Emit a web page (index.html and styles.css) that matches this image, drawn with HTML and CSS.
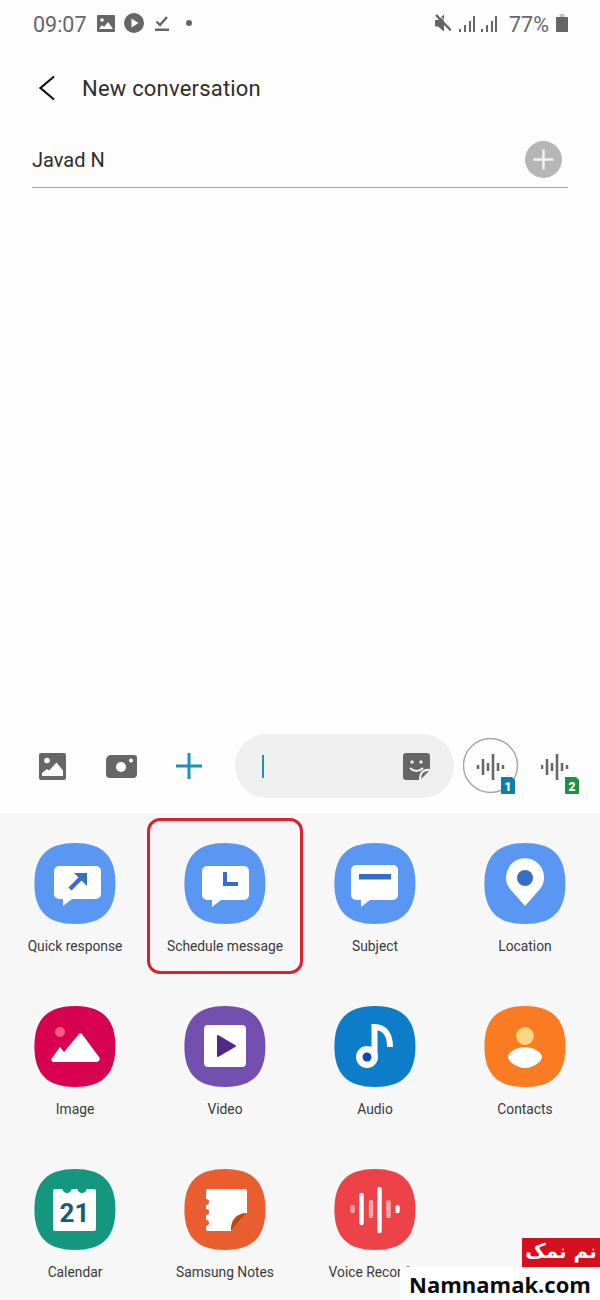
FILE: index.html
```html
<!DOCTYPE html>
<html lang="en">
<head>
<meta charset="utf-8">
<title>New conversation</title>
<link rel="stylesheet" href="styles.css">
</head>
<body>
<svg class="defs" aria-hidden="true"><defs>
  <path id="sq" d="M40 0C67.500 0 80.400 13 80.400 40.500C80.400 68 67.500 81 40 81C12.500 81-0.600 68-0.600 40.500C-0.600 13 12.500 0 40 0Z"/>
  <path id="wave" d="M1 12v4M6 6v16M11 10v8M16 1v26M21 10v8M26 12v4"/>
</defs></svg>
<div class="page">
  <div class="status">
    <span class="time">09:07</span>
    <svg class="st st-img" viewBox="0 0 18 17"><path fill="#666" d="M1 0h16a1 1 0 0 1 1 1v15a1 1 0 0 1-1 1H1a1 1 0 0 1-1-1V1a1 1 0 0 1 1-1Z"/><circle cx="5" cy="5" r="1.800" fill="#fff"/><path fill="#fff" d="M2 14l3-4 2 2 4-5 5 7Z"/></svg>
    <svg class="st st-play" viewBox="0 0 20 20"><circle cx="10" cy="10" r="10" fill="#666"/><path fill="#fff" d="M7.500 5.500l7 4.500-7 4.500Z"/></svg>
    <svg class="st st-check" viewBox="0 0 14 16"><path fill="none" stroke="#666" stroke-width="2.400" d="M1.500 6.500l3.500 3.500 7-8M0 14.800h14"/></svg>
    <span class="dot"></span>
    <span class="grow"></span>
    <svg class="st st-mute" viewBox="0 0 16 18"><path fill="#666" d="M0 6h3l6-5.500v17l-6-5H0Z"/><path stroke="#666" stroke-width="2.500" d="M1 1l15 15.500"/><path stroke="#fff" stroke-width="1" d="M3.500 0.500l13 13.500"/></svg>
    <svg class="st st-sig" viewBox="0 0 16 17"><path stroke="#666" stroke-width="2" d="M1 17v-3M6 17v-7M11 17v-11M15 17v-16"/></svg>
    <svg class="st st-sig st-sig2" viewBox="0 0 16 17"><path stroke="#666" stroke-width="2" d="M1 17v-3M6 17v-7M11 17v-11M15 17v-16"/></svg>
    <span class="pct">77%</span>
    <svg class="st st-bat" viewBox="0 0 12 18"><path fill="#c4c4c4" d="M3.500 0h5v3h-5Z"/><path fill="#666" d="M0 3h12v15H0Z"/></svg>
  </div>

  <div class="header">
    <svg class="back" viewBox="0 0 18 26"><path fill="none" stroke="#111" stroke-width="2.200" d="M16 1.500L2.500 13L16 24.500"/></svg>
    <span class="title">New conversation</span>
  </div>

  <div class="to-row">
    <span class="to-name">Javad N</span>
    <span class="add"><svg viewBox="0 0 37 37"><circle cx="18.500" cy="18.500" r="18.500" fill="#b6b6b6"/><path stroke="#f2f2f2" stroke-width="2.500" d="M18.500 8.500v20M8.500 18.500h20"/></svg></span>
  </div>

  <div class="thread"></div>

  <div class="compose">
    <svg class="c-img" viewBox="0 0 27 27"><path fill="#666" d="M2 0h23a2 2 0 0 1 2 2v23a2 2 0 0 1-2 2H2a2 2 0 0 1-2-2V2a2 2 0 0 1 2-2Z"/><circle cx="8" cy="7.500" r="2.800" fill="#fff"/><path fill="#fff" d="M3 23v-3l5-4 2 1.500 7.500-8 6.500 8V23Z"/></svg>
    <svg class="c-cam" viewBox="0 0 31 23"><path fill="#666" d="M4 0h24a3 3 0 0 1 3 3v16a4 4 0 0 1-4 4H4a4 4 0 0 1-4-4V6a6 6 0 0 1 4-6Z"/><circle cx="15" cy="12" r="5" fill="#fff"/><circle cx="25" cy="5.500" r="2" fill="#fff"/></svg>
    <svg class="c-plus" viewBox="0 0 26 26"><path stroke="#1b93b5" stroke-width="3" d="M13 0v27M0 13h26"/></svg>
    <div class="pill">
      <span class="caret"></span>
      <svg class="c-sticker" viewBox="0 0 27 27"><path fill="#666" d="M3 0h21a3 3 0 0 1 3 3v14L17 27H3a3 3 0 0 1-3-3V3a3 3 0 0 1 3-3Z"/><circle cx="9" cy="9" r="1.700" fill="#efefef"/><circle cx="18" cy="9" r="1.700" fill="#efefef"/><path fill="none" stroke="#efefef" stroke-width="2.200" d="M7 15c4 4 9 4 13 0"/><path fill="none" stroke="#efefef" stroke-width="2.200" d="M27 17c-6-1-10 2-10 10"/></svg>
    </div>
    <svg class="c-voice1" viewBox="0 0 56 56"><circle cx="27.500" cy="27.500" r="27" fill="none" stroke="#a4a4a4" stroke-width="1.400"/><g transform="translate(14 15)"><use href="#wave" fill="none" stroke="#666" stroke-width="2.500"/></g><path fill="#0f7cab" d="M38 39h11l3 3v13a1 1 0 0 1-1 1H39a1 1 0 0 1-1-1Z"/><text x="45" y="52.500" class="sim">1</text></svg>
    <svg class="c-voice2" viewBox="0 0 40 56"><g transform="translate(0 15)"><use href="#wave" fill="none" stroke="#666" stroke-width="2.500"/></g><path fill="#1f9145" d="M24 39h11l3 3v13a1 1 0 0 1-1 1H25a1 1 0 0 1-1-1Z"/><text x="31" y="52.500" class="sim">2</text></svg>
  </div>

  <div class="panel">
    <div class="cell">
      <svg class="tile" viewBox="0 0 81 81"><use href="#sq" fill="#5a97f2"/><path fill="#fff" d="M24 23h37a5 5 0 0 1 5 5v23a5 5 0 0 1-5 5H37l-9 7v-7h-4a5 5 0 0 1-5-5V28a5 5 0 0 1 5-5Z"/><path fill="none" stroke="#376fc7" stroke-width="4.500" d="M35 46l13-13"/><path fill="#376fc7" d="M39 30h13v13Z"/></svg>
      <span class="label">Quick response</span>
    </div>
    <div class="cell">
      <svg class="tile" viewBox="0 0 81 81"><use href="#sq" fill="#5a97f2"/><path fill="#fff" d="M22 23h37a5 5 0 0 1 5 5v24a5 5 0 0 1-5 5H36l-9 7v-7h-5a5 5 0 0 1-5-5V28a5 5 0 0 1 5-5Z"/><path fill="none" stroke="#376fc7" stroke-width="4" d="M40 29v12h13"/></svg>
      <span class="label">Schedule message</span>
      <span class="highlight"></span>
    </div>
    <div class="cell">
      <svg class="tile" viewBox="0 0 81 81"><use href="#sq" fill="#5a97f2"/><path fill="#fff" d="M21 22h37a5 5 0 0 1 5 5v25a5 5 0 0 1-5 5H35l-9 7v-7h-5a5 5 0 0 1-5-5V27a5 5 0 0 1 5-5Z"/><path fill="#376fc7" d="M24 31h32v5.500H24Z"/></svg>
      <span class="label">Subject</span>
    </div>
    <div class="cell">
      <svg class="tile" viewBox="0 0 81 81"><use href="#sq" fill="#5a97f2"/><path fill="#fff" d="M40 63L25 46a19 19 0 1 1 30 0Z"/><circle cx="40" cy="35" r="8" fill="#376fc7"/></svg>
      <span class="label">Location</span>
    </div>

    <div class="cell">
      <svg class="tile" viewBox="0 0 81 81"><use href="#sq" fill="#d6024f"/><circle cx="25" cy="26" r="5" fill="#fb5a83"/><path fill="#fff" d="M18 56a2.500 2.500 0 0 1-1-4l8-11 4 5 15-18a2 2 0 0 1 3 0l17 23a3 3 0 0 1-2 5Z"/></svg>
      <span class="label">Image</span>
    </div>
    <div class="cell">
      <svg class="tile" viewBox="0 0 81 81"><use href="#sq" fill="#7350b0"/><rect x="19" y="19" width="42" height="42" rx="4" fill="#fff"/><path fill="#4f2a86" stroke="#4f2a86" stroke-width="2" stroke-linejoin="round" d="M33 30l17 10-17 10Z"/></svg>
      <span class="label">Video</span>
    </div>
    <div class="cell">
      <svg class="tile" viewBox="0 0 81 81"><use href="#sq" fill="#0d7dc9"/><circle cx="32" cy="51" r="11" fill="#fff"/><circle cx="32" cy="51" r="4.500" fill="#0f49b5"/><path fill="none" stroke="#fff" stroke-width="6" d="M39.500 50V21C50 21 55 29 55 41"/></svg>
      <span class="label">Audio</span>
    </div>
    <div class="cell">
      <svg class="tile" viewBox="0 0 81 81"><use href="#sq" fill="#fb7b22"/><circle cx="40" cy="30" r="9" fill="#ffd67e"/><path fill="#fff" d="M40 41c9 0 17 6 17 10s-8 11-17 11-17-7-17-11 8-10 17-10Z"/></svg>
      <span class="label">Contacts</span>
    </div>

    <div class="cell">
      <svg class="tile" viewBox="0 0 81 81"><use href="#sq" fill="#15967e"/><path fill="#fff" d="M20 20H27.500a4.500 4 0 0 0 9 0H42.500a4.500 4 0 0 0 9 0H59a2 2 0 0 1 2 2v38a2 2 0 0 1-2 2H20a2 2 0 0 1-2-2V22a2 2 0 0 1 2-2Z"/><text x="39.500" y="53" class="cal">21</text></svg>
      <span class="label">Calendar</span>
    </div>
    <div class="cell">
      <svg class="tile" viewBox="0 0 81 81"><use href="#sq" fill="#ea5d2f"/><path fill="#fff" d="M23 20H60a2 2 0 0 1 2 2V44L46 62H23a2 2 0 0 1-2-2V57a3 3 0 0 0 0-6V46a3 3 0 0 0 0-6V36a3 3 0 0 0 0-6V22a2 2 0 0 1 2-2Z"/><path fill="#c4470a" d="M62 44L46 62C45 52 51 44 62 44Z"/></svg>
      <span class="label">Samsung Notes</span>
    </div>
    <div class="cell">
      <svg class="tile" viewBox="0 0 81 81"><use href="#sq" fill="#ec4248"/><g fill="none" stroke-width="4.500" stroke-linecap="round"><path stroke="#f9a8aa" d="M17.500 38v4M36 33v14M53.500 33v14"/><path stroke="#fff" d="M26.500 26v28M44.500 20v42M62.500 38v4"/></g></svg>
      <span class="label">Voice Recorder</span>
    </div>
  </div>

  <div class="wm-red" dir="rtl" lang="fa">نم نمک</div>
  <div class="wm-white">Namnamak.com</div>
</div>
</body>
</html>
```
FILE: styles.css
```css
* { box-sizing: border-box; }
html, body { margin: 0; padding: 0; }
body { font-family: Roboto, "Noto Sans", sans-serif; background: #fdfdfd; }
.defs { display: none; }
svg { display: block; flex: none; }

.page { position: relative; width: 600px; height: 1300px; overflow: hidden; display: flex; flex-direction: column; }

.status { height: 46px; padding: 0 32px 0 33px; display: flex; align-items: center; color: #666; }
.time { font-size: 21.500px; width: 54px; padding-top: 3px; }
.pct { font-size: 21.500px; margin-left: 12px; width: 40px; padding-top: 3px; }
.grow { flex: 1; }
.st-img { width: 18px; height: 17px; margin-left: 10px; }
.st-play { width: 20px; height: 20px; margin-left: 9px; }
.st-check { width: 14px; height: 16px; margin-left: 11px; }
.dot { width: 6px; height: 6px; border-radius: 50%; background: #666; margin-left: 17px; }
.st-mute { width: 16px; height: 18px; }
.st-sig { width: 16px; height: 17px; margin-left: 8px; }
.st-sig2 { margin-left: 6px; }
.st-bat { width: 12px; height: 18px; margin-left: 7px; }

.header { height: 84px; display: flex; align-items: center; padding-left: 38px; }
.back { width: 18px; height: 26px; }
.title { font-size: 22px; letter-spacing: 0.200px; margin-left: 26px; color: #2e2e2e; }

.to-row { height: 58px; margin: 0 32px; padding-top: 2px; display: flex; align-items: center; justify-content: space-between; border-bottom: 1px solid #a8a8a8; }
.to-name { font-size: 20px; color: #2e2e2e; }
.add { width: 37px; height: 37px; margin-right: 6px; }

.thread { flex: 1; }

.compose { height: 64px; margin-bottom: 15px; padding-left: 39px; display: flex; align-items: center; }
.c-img { width: 27px; height: 27px; }
.c-cam { width: 31px; height: 23px; margin-left: 40px; }
.c-plus { width: 26px; height: 26px; margin-left: 39px; }
.pill { width: 219px; height: 64px; margin-left: 33px; border-radius: 32px; background: #efefef; display: flex; align-items: center; justify-content: space-between; padding: 0 24px 0 27px; }
.caret { width: 2px; height: 23px; background: #1b93b5; }
.c-sticker { width: 27px; height: 27px; }
.c-voice1 { width: 56px; height: 56px; margin-left: 9px; }
.c-voice2 { width: 40px; height: 56px; margin-left: 22px; }
.sim { font: 900 12px Roboto, sans-serif; fill: #fff; text-anchor: middle; }

.panel { height: 487px; padding-top: 30px; background: #f7f7f7; display: grid; grid-template-columns: repeat(4, 150px); grid-auto-rows: 163px; }
.cell { position: relative; display: flex; flex-direction: column; align-items: center; }
.tile { width: 81px; height: 81px; overflow: visible; }
.label { font-size: 13.800px; line-height: 20px; margin-top: 12px; color: #3a3a3a; white-space: nowrap; }
.cal { font: 700 26px Roboto, sans-serif; fill: #155f6d; text-anchor: middle; }
.highlight { position: absolute; left: -3px; top: -25px; width: 156px; height: 156px; border: 3px solid #d8222f; border-radius: 13px; }

.wm-red { position: absolute; left: 522px; top: 1238px; width: 78px; height: 29px; background: #d50f1c; color: #fff; font: 700 20px/27px "DejaVu Sans", sans-serif; text-align: center; white-space: nowrap; }
.wm-white { position: absolute; left: 400px; top: 1267px; width: 200px; height: 33px; background: #fff; color: #0a0a0a; font: 700 22px/34px "Open Sans", sans-serif; padding-left: 9px; white-space: nowrap; }
```
